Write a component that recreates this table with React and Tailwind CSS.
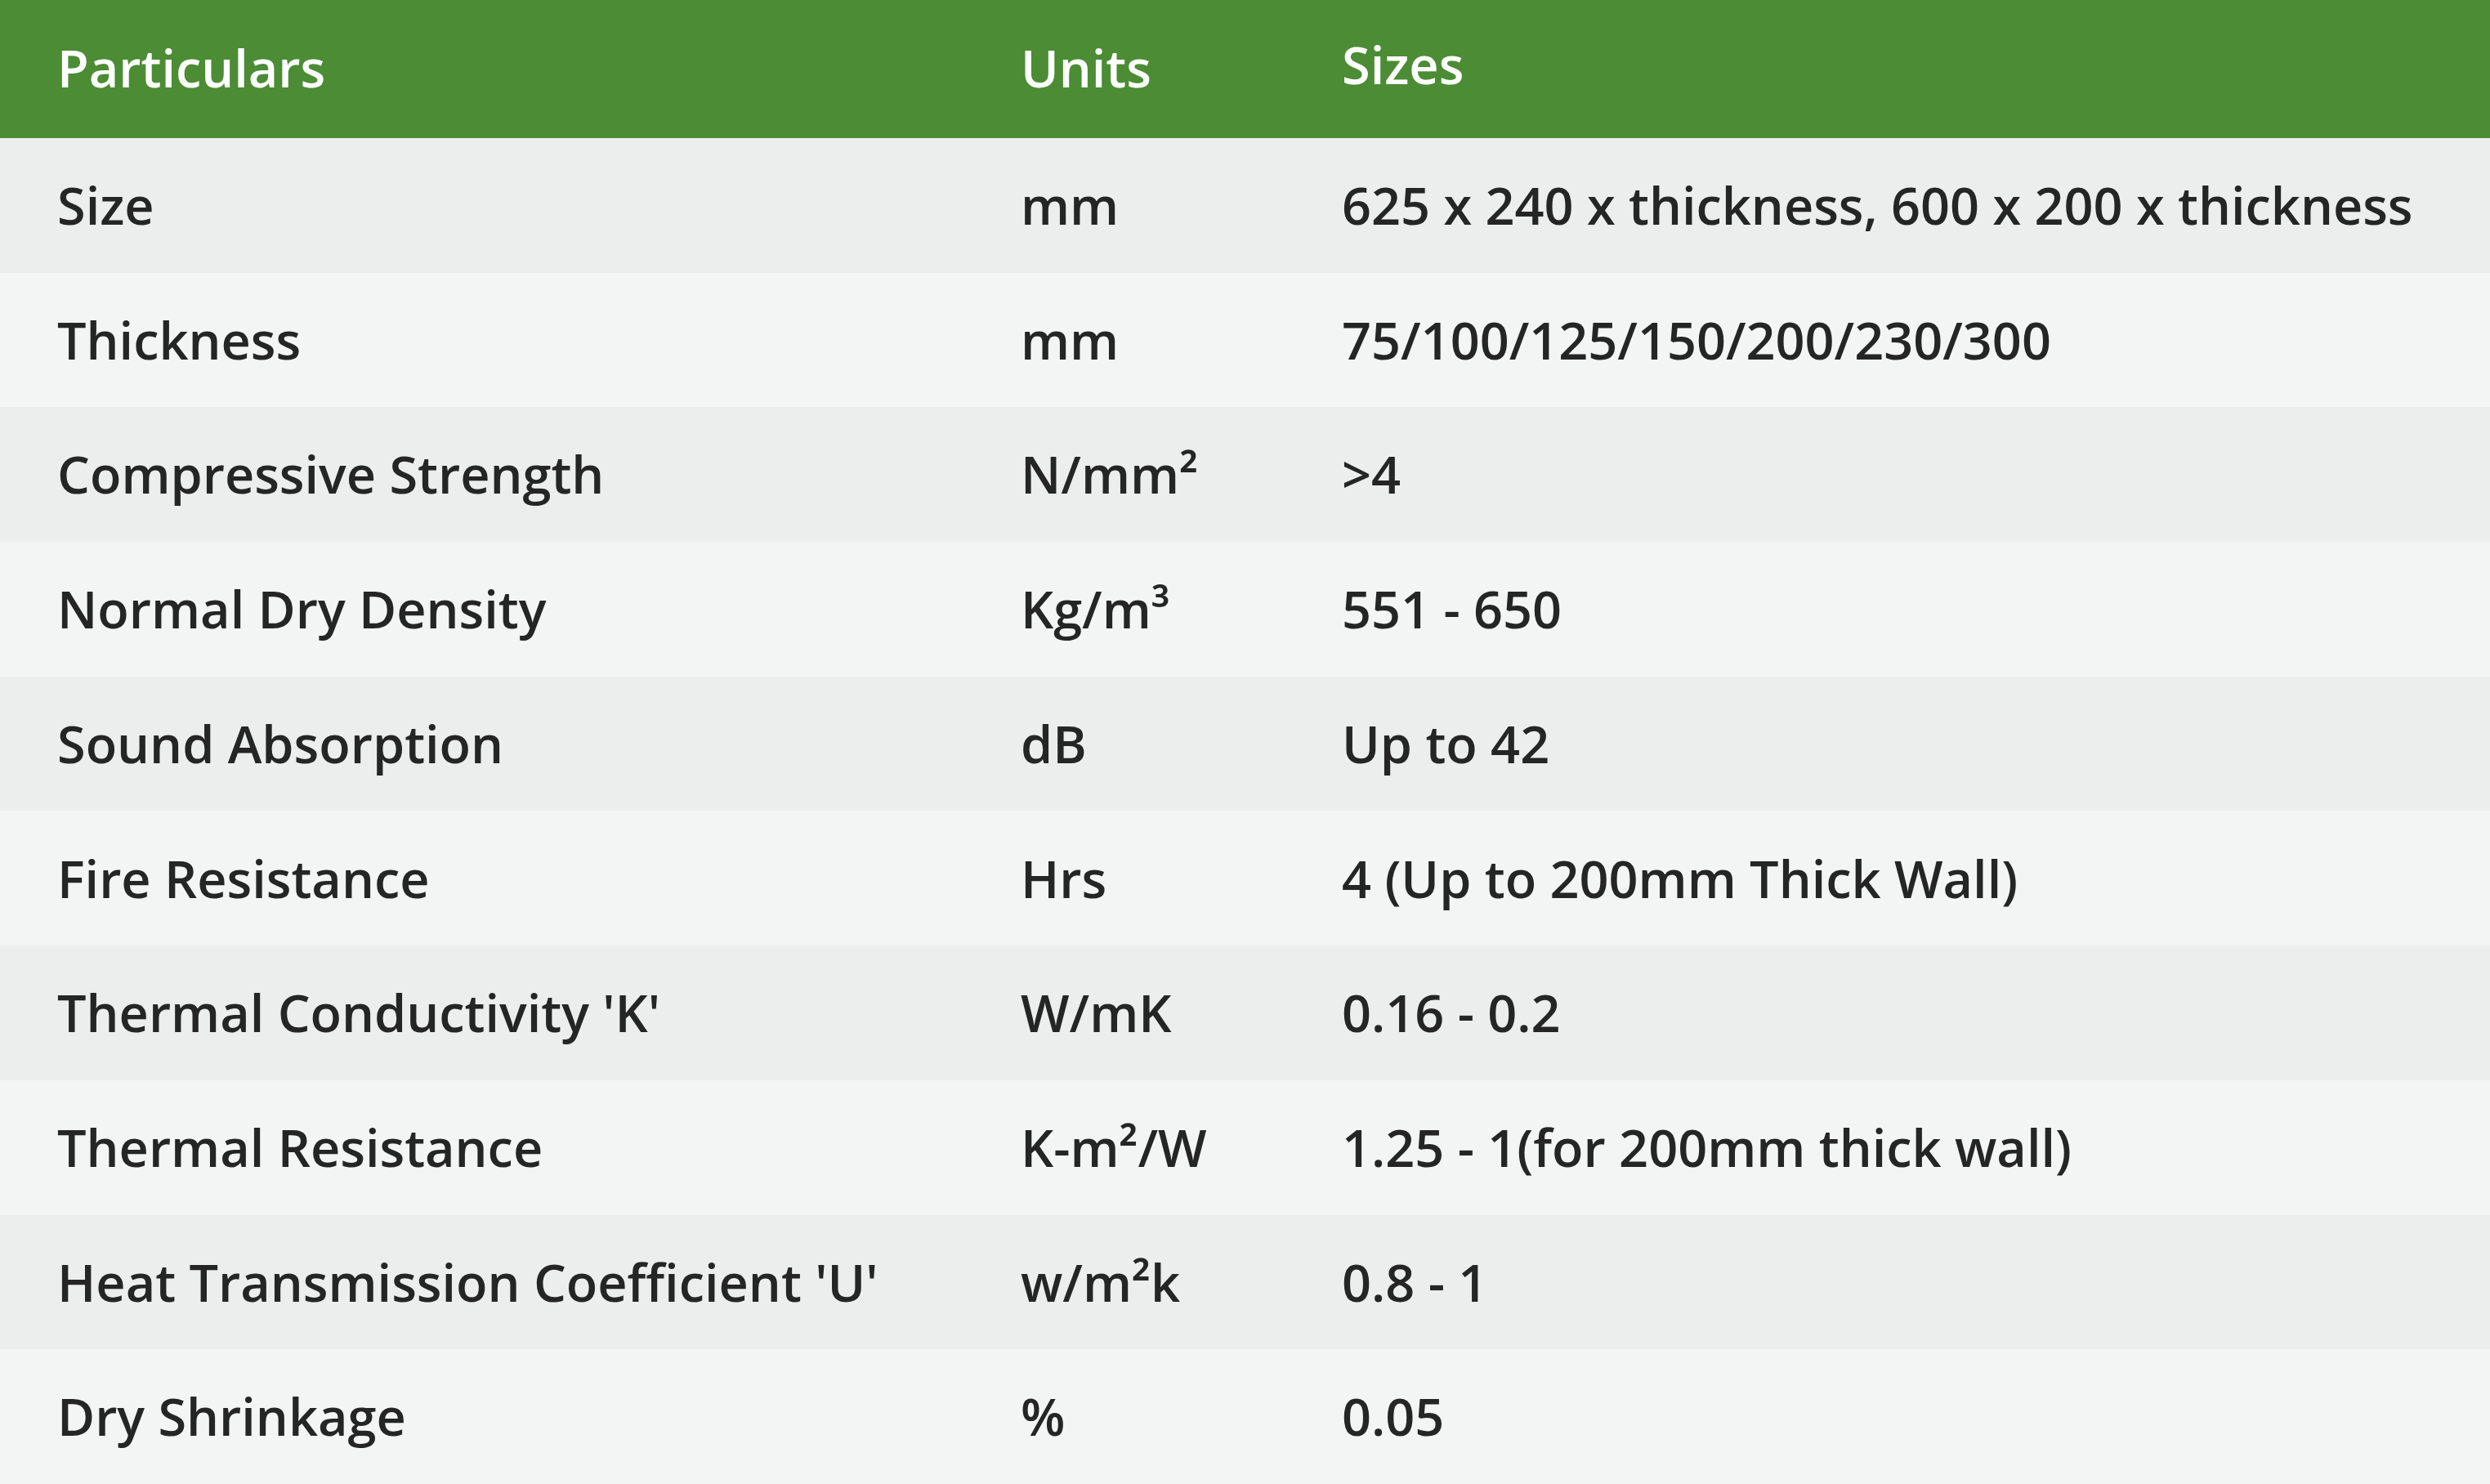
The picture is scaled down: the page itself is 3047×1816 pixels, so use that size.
const ROWS = [
  ["Size", "mm", "625 x 240 x thickness, 600 x 200 x thickness"],
  ["Thickness", "mm", "75/100/125/150/200/230/300"],
  ["Compressive Strength", "N/mm²", ">4"],
  ["Normal Dry Density", "Kg/m³", "551 - 650"],
  ["Sound Absorption", "dB", "Up to 42"],
  ["Fire Resistance", "Hrs", "4 (Up to 200mm Thick Wall)"],
  ["Thermal Conductivity 'K'", "W/mK", "0.16 - 0.2"],
  ["Thermal Resistance", "K-m²/W", "1.25 - 1(for 200mm thick wall)"],
  ["Heat Transmission Coefficient 'U'", "w/m²k", "0.8 - 1"],
  ["Dry Shrinkage", "%", "0.05"],
];

export default function App() {
  return (
    <div className="w-[3047px] h-[1816px] font-['Open_Sans',sans-serif] text-[63px] font-semibold text-[#252525]">
      {/* header */}
      <div className="grid grid-cols-[1179px_393px_1fr] h-[169px] items-center bg-[#4b8c34] text-white pl-[70px] pb-[3px]">
        <div>Particulars</div>
        <div>Units</div>
        <div className="pb-[8px]">Sizes</div>
      </div>

      {ROWS.map((row, index) => (
        <div
          key={index}
          className={`grid grid-cols-[1179px_393px_1fr] h-[164.7px] items-center pl-[70px] ${
            index % 2 === 0 ? "bg-[#eceded]" : "bg-[#f3f5f4]"
          }`}
        >
          <div>{row[0]}</div>
          <div>{row[1]}</div>
          <div>{row[2]}</div>
        </div>
      ))}
    </div>
  );
}
